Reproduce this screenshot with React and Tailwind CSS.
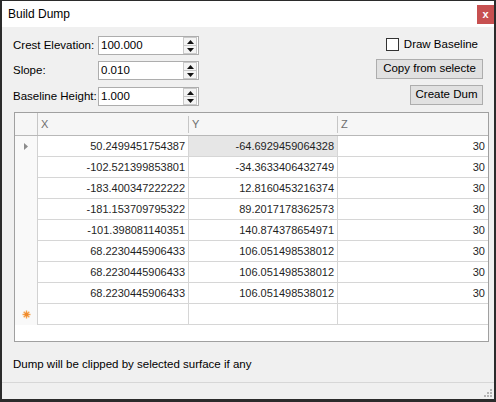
import React from "react";

const rows = [
  ["50.2499451754387", "-64.6929459064328", "30"],
  ["-102.521399853801", "-34.3633406432749", "30"],
  ["-183.400347222222", "12.8160453216374", "30"],
  ["-181.153709795322", "89.2017178362573", "30"],
  ["-101.398081140351", "140.874378654971", "30"],
  ["68.2230445906433", "106.051498538012", "30"],
  ["68.2230445906433", "106.051498538012", "30"],
  ["68.2230445906433", "106.051498538012", "30"],
];

const SpinInput = ({ value }) => (
  <div className="w-[101px] h-[19px] border border-[#adadad] bg-white flex items-center">
    <span className="flex-1 pl-[2px] text-[11.5px] text-black leading-none">{value}</span>
    <div className="w-[14px] h-[17px] mr-[1px] flex flex-col">
      <div className="flex-1 border border-[#c9c9c9] bg-[#f4f4f4] flex items-center justify-center">
        <svg width="7" height="4" viewBox="0 0 7 4">
          <path d="M0 4 L3.5 0 L7 4 Z" fill="#111" />
        </svg>
      </div>
      <div className="flex-1 border border-t-0 border-[#c9c9c9] bg-[#f4f4f4] flex items-center justify-center">
        <svg width="7" height="4" viewBox="0 0 7 4">
          <path d="M0 0 L7 0 L3.5 4 Z" fill="#111" />
        </svg>
      </div>
    </div>
  </div>
);

const FormRow = ({ label, value, className }) => (
  <div className={"flex items-center h-[19px] " + (className || "")}>
    <span className="w-[85px] text-[11.5px] text-black">{label}</span>
    <SpinInput value={value} />
  </div>
);

const HeaderCell = ({ label, width }) => (
  <div className={"h-full flex items-center justify-between " + width}>
    <span className="pl-[3px] text-[11px] text-[#6e6e6e]">{label}</span>
    <div className="w-px h-[17px] bg-[#c6c6c6]" />
  </div>
);

export default function App() {
  return (
    <div
      className="w-[496px] h-[402px] border-x-2 border-t border-b-[3px] border-[#2b2b2b] bg-[#f0f0f0] flex flex-col"
      style={{ fontFamily: '"Liberation Sans", Arial, sans-serif' }}
    >
      {/* title bar */}
      <div className="h-[26px] bg-white flex justify-between items-start">
        <span className="pl-[6px] leading-[26px] text-[12px] text-black">Build Dump</span>
        <div className="mt-[4px] w-[17px] h-[19px] bg-[#c75050] flex items-center justify-center text-white text-[11px] font-bold leading-none">
          x
        </div>
      </div>

      <div className="flex-1 flex flex-col">
        {/* form */}
        <div className="flex justify-between pl-[11px] pr-[11px] pt-[9px]">
          <div className="flex flex-col">
            <FormRow label="Crest Elevation:" value="100.000" />
            <FormRow label="Slope:" value="0.010" className="mt-[6px]" />
            <FormRow label="Baseline Height:" value="1.000" className="mt-[7px]" />
          </div>
          <div className="flex flex-col items-end">
            <div className="h-[17px] flex items-center mr-[5px]">
              <div className="w-[13px] h-[13px] border border-[#333] bg-white" />
              <span className="ml-[5px] text-[11.5px] text-black">Draw Baseline</span>
            </div>
            <button className="mt-[6px] w-[107px] h-[20px] border border-[#adadad] bg-[#e1e1e1] text-[11.5px] text-black">
              Copy from selecte
            </button>
            <button className="mt-[6px] w-[73px] h-[20px] border border-[#adadad] bg-[#e1e1e1] text-[11.5px] text-black">
              Create Dum
            </button>
          </div>
        </div>

        {/* grid */}
        <div className="ml-[12px] mt-[6px] w-[475px] h-[230px] border border-[#a0a0a0] bg-white flex flex-col">
          <div className="h-[23px] border-b border-[#b8b8b8] bg-[#f6f6f6] flex">
            <div className="w-[23px] h-full border-r border-[#c6c6c6]" />
            <HeaderCell label="X" width="w-[151px]" />
            <HeaderCell label="Y" width="w-[149px]" />
            <div className="flex-1 h-full flex items-center">
              <span className="pl-[3px] text-[11px] text-[#6e6e6e]">Z</span>
            </div>
          </div>

          {rows.map((r, i) => (
            <div key={i} className="h-[21px] flex text-[11px] text-[#1f1f1f]">
              <div className="w-[23px] h-full border-r border-[#d2d2d2] bg-[#f9f9f9] flex items-center justify-center">
                {i === 0 && (
                  <svg width="4" height="7" viewBox="0 0 4 7">
                    <path d="M0 0 L4 3.5 L0 7 Z" fill="#8c8c8c" />
                  </svg>
                )}
              </div>
              <div className="w-[151px] h-full border-r border-b border-[#d6d6d6] flex items-center justify-end pr-[3px]">
                {r[0]}
              </div>
              <div
                className={
                  "w-[149px] h-full border-r border-b border-[#d6d6d6] flex items-center justify-end pr-[3px] " +
                  (i === 0 ? "bg-[#e6e6e6]" : "")
                }
              >
                {r[1]}
              </div>
              <div className="flex-1 h-full border-b border-[#d6d6d6] flex items-center justify-end pr-[3px]">
                {r[2]}
              </div>
            </div>
          ))}

          {/* new row */}
          <div className="h-[21px] flex">
            <div className="w-[23px] h-full border-r border-[#d2d2d2] bg-[#f9f9f9] flex items-center justify-center">
              <svg width="9" height="9" viewBox="0 0 9 9">
                <g stroke="#f4a14a" strokeWidth="1.4">
                  <line x1="4.5" y1="0.5" x2="4.5" y2="8.5" />
                  <line x1="0.5" y1="4.5" x2="8.5" y2="4.5" />
                  <line x1="1.7" y1="1.7" x2="7.3" y2="7.3" />
                  <line x1="7.3" y1="1.7" x2="1.7" y2="7.3" />
                </g>
                <circle cx="4.5" cy="4.5" r="2" fill="#f08a2c" />
              </svg>
            </div>
            <div className="w-[151px] h-full border-r border-b border-[#d6d6d6]" />
            <div className="w-[149px] h-full border-r border-b border-[#d6d6d6]" />
            <div className="flex-1 h-full border-b border-[#d6d6d6]" />
          </div>
        </div>

        {/* note */}
        <div className="mt-[15px] pl-[11px] text-[11.5px] leading-[14px] text-black">
          Dump will be clipped by selected surface if any
        </div>

        {/* status bar */}
        <div className="mt-auto h-[17px] border-t border-[#d7d7d7] flex justify-end items-end">
          <svg width="10" height="10" viewBox="0 0 10 10" className="mb-[1px] mr-[1px]">
            <g fill="#b4b4b4">
              <rect x="7" y="1" width="2" height="2" />
              <rect x="4" y="4" width="2" height="2" />
              <rect x="7" y="4" width="2" height="2" />
              <rect x="1" y="7" width="2" height="2" />
              <rect x="4" y="7" width="2" height="2" />
              <rect x="7" y="7" width="2" height="2" />
            </g>
          </svg>
        </div>
      </div>
    </div>
  );
}
